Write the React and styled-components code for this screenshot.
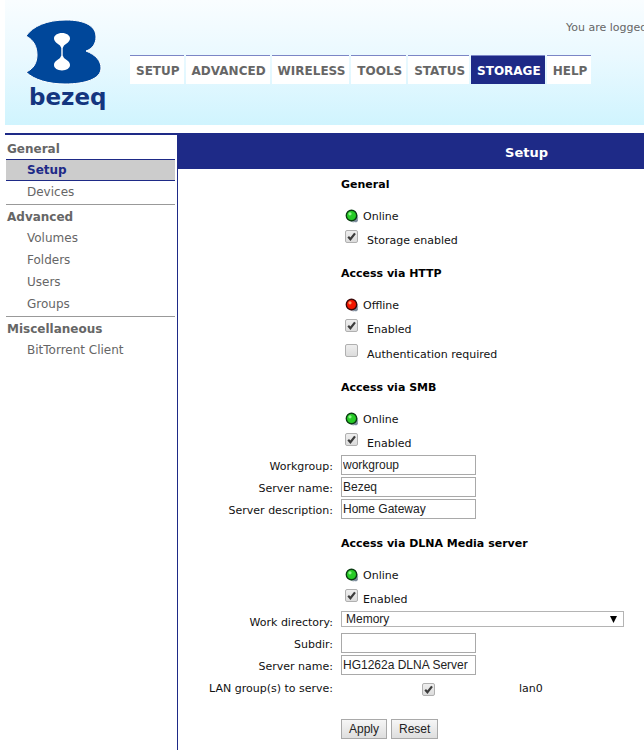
import React, { useState } from "react";
import styled, { createGlobalStyle, ThemeProvider } from "styled-components";

const theme = {
  navy: "#1e2a87",
  logoBlue: "#00479a",
  grayText: "#666666",
  lineColor: "#999999",
  font: '"DejaVu Sans", Verdana, sans-serif',
  inputFont: '"Liberation Sans", Arial, sans-serif',
};

const NAV = ["SETUP", "ADVANCED", "WIRELESS", "TOOLS", "STATUS", "STORAGE", "HELP"];

const MENU = [
  { title: "General", items: ["Setup", "Devices"] },
  { title: "Advanced", items: ["Volumes", "Folders", "Users", "Groups"] },
  { title: "Miscellaneous", items: ["BitTorrent Client"] },
];

function Logo() {
  return (
    <LogoSvg viewBox="0 0 84 90" role="img" aria-label="bezeq">
      <path
        d="M1 17C8 7 22 1 41 1C60 1 71 7 71 18C71 25 67 30 61 32C71 36 76 42 76 49C76 60 60 65 40 65C24 65 9 61 1 53C9 50 12 43 12 36C12 28 9 21 1 17Z"
        fill={theme.logoBlue}
        stroke="#fff"
        strokeWidth="1"
      />
      <path
        d="M37 14C41.5 14 45 16.4 45 19.5C45 22.5 41.5 24.5 39 26.5L37.7 29V36.5L39 39C41.5 41 45 42.5 45 46C45 49.2 41.5 51.4 37 51.4C32.5 51.4 29 49.2 29 46C29 42.5 32.5 41 35 39L36.3 36.5V29L35 26.5C32.5 24.5 29 22.5 29 19.5C29 16.4 32.5 14 37 14Z"
        fill="#fff"
      />
      <LogoText x="4" y="86">
        bezeq
      </LogoText>
    </LogoSvg>
  );
}

function Status({ online }) {
  return (
    <StatusRow>
      <svg width="14" height="14" viewBox="0 0 14 14" aria-hidden="true">
        <circle cx="8.4" cy="8.6" r="4.8" fill="#a3aebb" />
        <path d="M8 12L12 8L13 12L11 13.4Z" fill="#7c8b9c" />
        <circle cx="6.5" cy="6.5" r="5.2" fill={online ? "#27cc27" : "#f31600"} stroke={online ? "#0b3d12" : "#3d0808"} strokeWidth="1.4" />
        <circle cx="5" cy="4.8" r="1.6" fill={online ? "#8ef58a" : "#ff9a6a"} />
      </svg>
      {online ? "Online" : "Offline"}
    </StatusRow>
  );
}

function Checkbox({ id, checked: initial }) {
  const [checked, setChecked] = useState(!!initial);

  return (
    <CheckWrap>
      <CheckInput id={id} type="checkbox" checked={checked} onChange={(e) => setChecked(e.target.checked)} />
      {checked && (
        <CheckMark viewBox="0 0 13 13" aria-hidden="true">
          <path d="M3.2 6.8L5.4 9.2L10 3.4" fill="none" stroke="#3c3c3c" strokeWidth="2.2" />
        </CheckMark>
      )}
    </CheckWrap>
  );
}

function CheckLine({ id, label, checked, tight }) {
  return (
    <CheckRow $tight={tight}>
      <Checkbox id={id} checked={checked} />
      <label htmlFor={id}>{label}</label>
    </CheckRow>
  );
}

function TextField({ id, label, value }) {
  return (
    <FieldRow>
      <FieldLabel htmlFor={id}>{label}</FieldLabel>
      <TextInput id={id} type="text" defaultValue={value} />
    </FieldRow>
  );
}

function App() {
  const [page, setPage] = useState("Setup");

  const onSubmit = (e) => {
    e.preventDefault();
  };

  return (
    <ThemeProvider theme={theme}>
      <GlobalStyle />
      <Page>
        <Header>
          <Logo />
          <HeaderRight>
            <LoginInfo>You are logged in</LoginInfo>
            <Nav>
              {NAV.map((name) => (
                <NavLink key={name} href="#" $active={name === "STORAGE"}>
                  {name}
                </NavLink>
              ))}
            </Nav>
          </HeaderRight>
        </Header>
        <Body>
          <Sidebar>
            {MENU.map((group) => (
              <MenuGroup key={group.title}>
                <MenuTitle>{group.title}</MenuTitle>
                {group.items.map((item) => (
                  <MenuLink key={item} href="#" $active={item === page} onClick={() => setPage(item)}>
                    {item}
                  </MenuLink>
                ))}
              </MenuGroup>
            ))}
          </Sidebar>
          <Main>
            <TitleBar>Setup</TitleBar>
            <form onSubmit={onSubmit}>
              <Section>
                <SectionTitle>General</SectionTitle>
                <Status online />
                <CheckLine id="storage" label="Storage enabled" checked />
              </Section>
              <Section>
                <SectionTitle>Access via HTTP</SectionTitle>
                <Status />
                <CheckLine id="http" label="Enabled" checked />
                <CheckLine id="auth" label="Authentication required" />
              </Section>
              <Section>
                <SectionTitle>Access via SMB</SectionTitle>
                <Status online />
                <CheckLine id="smb" label="Enabled" checked />
                <Fields>
                  <TextField id="workgroup" label="Workgroup:" value="workgroup" />
                  <TextField id="smbName" label="Server name:" value="Bezeq" />
                  <TextField id="smbDesc" label="Server description:" value="Home Gateway" />
                </Fields>
              </Section>
              <Section>
                <SectionTitle>Access via DLNA Media server</SectionTitle>
                <Status online />
                <CheckLine id="dlna" label="Enabled" checked tight />
                <Fields>
                  <FieldRow>
                    <FieldLabel htmlFor="workDir">Work directory:</FieldLabel>
                    <SelectWrap>
                      <Select id="workDir">
                        <option>Memory</option>
                      </Select>
                      <Arrow viewBox="0 0 7 7" aria-hidden="true">
                        <path d="M0 0H7L3.5 7Z" fill="#000" />
                      </Arrow>
                    </SelectWrap>
                  </FieldRow>
                  <TextField id="subdir" label="Subdir:" value="" />
                  <TextField id="dlnaName" label="Server name:" value="HG1262a DLNA Server" />
                  <FieldRow>
                    <FieldLabel as="span">LAN group(s) to serve:</FieldLabel>
                    <LanGroup>
                      <Checkbox id="lan0" checked />
                      <label htmlFor="lan0">lan0</label>
                    </LanGroup>
                  </FieldRow>
                </Fields>
              </Section>
              <Buttons>
                <Btn type="submit">Apply</Btn>
                <Btn type="reset">Reset</Btn>
              </Buttons>
            </form>
          </Main>
        </Body>
      </Page>
    </ThemeProvider>
  );
}

export default App;

const GlobalStyle = createGlobalStyle`
  * {
    box-sizing: border-box;
  }
  body {
    margin: 0;
    background: #fff;
    overflow: hidden;
  }
`;

// the admin page is wider than a small window, it runs off to the right
const Page = styled.div`
  min-width: 880px;
  padding: 0 5px;
  font-family: ${(props) => props.theme.font};
  font-size: 11px;
  color: #111;
`;

const Header = styled.header`
  display: flex;
  height: 125px;
  padding: 19px 0 0 20px;
  background: linear-gradient(#f9fdff, #eaf9ff 45%, #d0f4fe);
`;

const LogoSvg = styled.svg`
  width: 84px;
  height: 90px;
  flex: none;
  overflow: visible;
`;

const LogoText = styled.text`
  font-family: ${(props) => props.theme.font};
  font-size: 23px;
  font-weight: bold;
  fill: #14357f;
`;

const HeaderRight = styled.div`
  flex: 1;
  padding-left: 21px;
`;

const LoginInfo = styled.div`
  height: 36px;
  padding-left: 436px;
  line-height: 18px;
  white-space: nowrap;
  color: ${(props) => props.theme.grayText};
`;

const Nav = styled.nav`
  display: flex;
  gap: 2px;
`;

const NavLink = styled.a`
  height: 29px;
  padding: 0 4px 0 6px;
  border-top: 1px solid #7b86c6;
  background: ${(props) => (props.$active ? props.theme.navy : "#fff")};
  color: ${(props) => (props.$active ? "#fff" : props.theme.grayText)};
  font-size: 12px;
  font-weight: bold;
  line-height: 30px;
  text-decoration: none;
`;

const Body = styled.div`
  display: flex;
  margin-top: 8px;
  border-top: 2px solid ${(props) => props.theme.navy};
`;

const Sidebar = styled.aside`
  width: 172px;
  flex: none;
  padding: 2px 2px 0 1px;
`;

const MenuGroup = styled.div`
  padding-bottom: 1px;

  & + & {
    border-top: 1px solid ${(props) => props.theme.lineColor};
  }
`;

const MenuTitle = styled.div`
  height: 22px;
  padding-left: 1px;
  color: ${(props) => props.theme.grayText};
  font-size: 12px;
  font-weight: bold;
  line-height: 24px;
`;

const MenuLink = styled.a`
  display: block;
  height: 22px;
  padding-left: 21px;
  border: solid ${(props) => (props.$active ? props.theme.navy : "transparent")};
  border-width: 1px 0;
  background: ${(props) => (props.$active ? "#cccccc" : "none")};
  color: ${(props) => (props.$active ? props.theme.navy : props.theme.grayText)};
  font-size: 12px;
  font-weight: ${(props) => (props.$active ? "bold" : "normal")};
  line-height: 21px;
  text-decoration: none;
`;

const Main = styled.main`
  flex: 1;
  min-height: calc(100vh - 135px);
  border-left: 1px solid ${(props) => props.theme.navy};
`;

const TitleBar = styled.h1`
  margin: 0;
  height: 34px;
  background: ${(props) => props.theme.navy};
  color: #fff;
  font-size: 13px;
  font-weight: bold;
  line-height: 36px;
  text-align: center;
`;

const Section = styled.section`
  & + & {
    padding-top: 6px;
  }
`;

const SectionTitle = styled.h2`
  margin: 0;
  height: 33px;
  padding-left: 163px;
  color: #000;
  font-size: 11px;
  font-weight: bold;
  line-height: 32px;
`;

const StatusRow = styled.div`
  display: flex;
  align-items: center;
  gap: 4px;
  height: 26px;
  padding: 2px 0 0 167px;
`;

const CheckRow = styled.div`
  display: flex;
  gap: ${(props) => (props.$tight ? "5px" : "9px")};
  height: 24px;
  padding: 2px 0 0 167px;
  line-height: 22px;

  & + & {
    margin-top: 1px;
  }
`;

const CheckWrap = styled.span`
  position: relative;
  width: 13px;
  height: 13px;
  flex: none;
`;

const CheckInput = styled.input`
  appearance: none;
  display: block;
  width: 13px;
  height: 13px;
  margin: 0;
  border: 1px solid #b0b0b0;
  border-radius: 2px;
  background: linear-gradient(#eeeeee, #dcdcdc);
`;

const CheckMark = styled.svg`
  position: absolute;
  inset: 0;
  pointer-events: none;
`;

const Fields = styled.div`
  padding-bottom: 1px;
`;

const FieldRow = styled.div`
  display: grid;
  grid-template-columns: 155px 1fr;
  column-gap: 8px;
  height: 22px;
`;

const FieldLabel = styled.label`
  line-height: 24px;
  text-align: right;
  white-space: nowrap;
`;

const TextInput = styled.input`
  width: 135px;
  height: 20px;
  padding: 0 1px 1px;
  border: 1px solid #a9a9a9;
  background: #fff;
  color: #222;
  font-family: ${(props) => props.theme.inputFont};
  font-size: 12px;
`;

const SelectWrap = styled.div`
  position: relative;
  width: 283px;
  height: 16px;
`;

const Select = styled.select`
  appearance: none;
  display: block;
  width: 100%;
  height: 16px;
  padding: 0 4px;
  border: 1px solid #b4b4b4;
  border-radius: 0;
  background: #fff;
  color: #222;
  font-family: ${(props) => props.theme.inputFont};
  font-size: 12px;
  line-height: 14px;
`;

const Arrow = styled.svg`
  position: absolute;
  top: 5px;
  right: 7px;
  width: 7px;
  height: 7px;
  pointer-events: none;
`;

const LanGroup = styled.div`
  display: grid;
  grid-template-columns: 175px 1fr;
  column-gap: 3px;
  align-items: center;
  line-height: 24px;

  ${CheckWrap} {
    justify-self: center;
  }
`;

const Buttons = styled.div`
  display: flex;
  gap: 4px;
  padding: 19px 0 0 163px;
`;

const Btn = styled.button`
  height: 20px;
  padding: 0 7px;
  border: 1px solid #a9a9a9;
  border-radius: 0;
  background: linear-gradient(#f6f6f6, #dedede);
  color: #222;
  font-family: ${(props) => props.theme.inputFont};
  font-size: 12px;
`;
